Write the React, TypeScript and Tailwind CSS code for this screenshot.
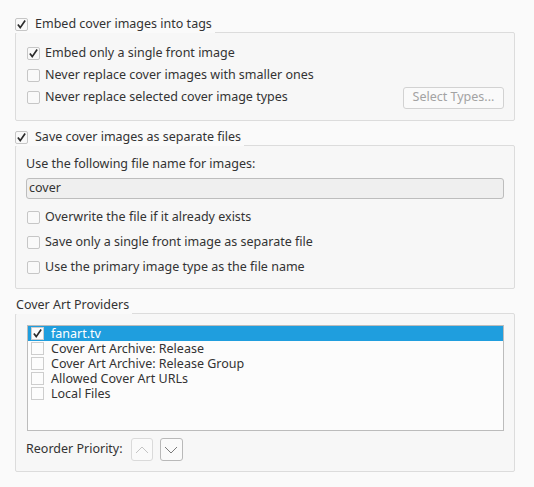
const Check = () => (
    <svg viewBox="0 0 13 13" className="w-[13px] h-[13px]">
        <path d="M2.2 6.6 L5 10.2 L10.8 1.8" fill="none" stroke="#2b2b2b" strokeWidth="2" strokeLinecap="butt" strokeLinejoin="miter" />
    </svg>
);

type BoxProps = {
    checked?: boolean;
    list?: boolean;
};

const CheckBox = ({ checked = false, list = false }: BoxProps) => (
    <div
        className={
            list
                ? "w-[13px] h-[13px] shrink-0 border border-[#cdcdcd] bg-[#fcfcfc] flex items-center justify-center"
                : "w-[13px] h-[13px] shrink-0 border border-[#c6c6c6] rounded-[2px] bg-[#f9f9f9] flex items-center justify-center"
        }
    >
        {checked && <Check />}
    </div>
);

const Row = ({ label, checked = false }: { label: string; checked?: boolean }) => (
    <div className="flex items-center gap-[5px] h-[25px]">
        <CheckBox checked={checked} />
        <span>{label}</span>
    </div>
);

const providers = [
    "Cover Art Archive: Release",
    "Cover Art Archive: Release Group",
    "Allowed Cover Art URLs",
    "Local Files",
];

export default function App() {
    return (
        <div
            className="w-[534px] h-[487px] bg-[#fafafa] text-[#333333] text-[12.5px] leading-none pl-[15px] pr-[19px] pt-[15px] overflow-hidden whitespace-nowrap"
            style={{ fontFamily: '"Noto Sans", "Open Sans", sans-serif' }}
        >
            {/* embed section */}
            <div className="relative z-10 -mb-px flex items-center gap-[7px] h-[18px] w-fit pr-[3px] bg-[#fafafa]">
                <CheckBox checked />
                <span>Embed cover images into tags</span>
            </div>
            <div className="border border-[#dcdcdc] rounded-[2px] bg-[#f7f7f7] pl-[11px] pr-[10px] pt-[9px] pb-[11px]">
                <div className="flex items-center gap-[5px] h-[22px]">
                    <CheckBox checked />
                    <span>Embed only a single front image</span>
                </div>
                <div className="flex items-center gap-[5px] h-[22px]">
                    <CheckBox />
                    <span>Never replace cover images with smaller ones</span>
                </div>
                <div className="flex items-center gap-[5px] h-[23px]">
                    <CheckBox />
                    <span>Never replace selected cover image types</span>
                    <div className="ml-auto w-[101px] h-[22px] border border-[#d2d2d2] rounded-[3px] bg-[#fafafa] text-[#a3a3a3] flex items-center justify-center">
                        Select Types...
                    </div>
                </div>
            </div>

            {/* save section */}
            <div className="relative z-10 -mb-px mt-[8px] flex items-center gap-[7px] h-[17px] w-fit pr-[3px] bg-[#fafafa]">
                <CheckBox checked />
                <span>Save cover images as separate files</span>
            </div>
            <div className="border border-[#dcdcdc] rounded-[2px] bg-[#f7f7f7] pl-[10px] pr-[10px] pt-[9px] pb-[8px]">
                <div className="h-[18px] flex items-center">Use the following file name for images:</div>
                <div className="mt-[5px] h-[21px] border border-[#bdbdbd] rounded-[3px] bg-[#efefef] flex items-center pl-[2px]">
                    cover
                </div>
                <div className="mt-[6px] pl-px">
                    <Row label="Overwrite the file if it already exists" />
                    <Row label="Save only a single front image as separate file" />
                    <Row label="Use the primary image type as the file name" />
                </div>
            </div>

            {/* providers */}
            <div className="relative z-10 -mb-px mt-[8px] h-[17px] w-fit pl-px pr-[3px] bg-[#fafafa] flex items-center">
                Cover Art Providers
            </div>
            <div className="border border-[#dcdcdc] rounded-[2px] bg-[#f7f7f7] pl-[11px] pr-[10px] pt-[11px] pb-[10px]">
                <div className="h-[106px] border border-[#bcbcbc] bg-[#fcfcfc]">
                    <div className="h-[15px] bg-[#1f9ede] text-white flex items-center gap-[7px] pl-[3px]">
                        <CheckBox checked list />
                        <span className="block leading-[15px] h-[15px]">fanart.tv</span>
                    </div>
                    {providers.map((p) => (
                        <div key={p} className="h-[15px] flex items-center gap-[7px] pl-[3px]">
                            <CheckBox list />
                            <span className="block leading-[15px] h-[15px]">{p}</span>
                        </div>
                    ))}
                </div>
                <div className="mt-[7px] flex items-center h-[23px]">
                    <span className="-ml-px">Reorder Priority:</span>
                    <div className="ml-[8px] w-[22px] h-[23px] border border-[#dadada] rounded-[3px] bg-[#fafafa] flex items-center justify-center">
                        <svg viewBox="0 0 14 8" className="w-[14px] h-[8px]">
                            <path d="M1 7 L7 1 L13 7" fill="none" stroke="#c4c4c4" strokeWidth="1" />
                        </svg>
                    </div>
                    <div className="ml-[7px] w-[23px] h-[23px] border border-[#b9b9b9] rounded-[3px] bg-[#fafafa] flex items-center justify-center">
                        <svg viewBox="0 0 14 8" className="w-[14px] h-[8px]">
                            <path d="M1 1 L7 7 L13 1" fill="none" stroke="#7a7a7a" strokeWidth="1" />
                        </svg>
                    </div>
                </div>
            </div>
        </div>
    );
}
